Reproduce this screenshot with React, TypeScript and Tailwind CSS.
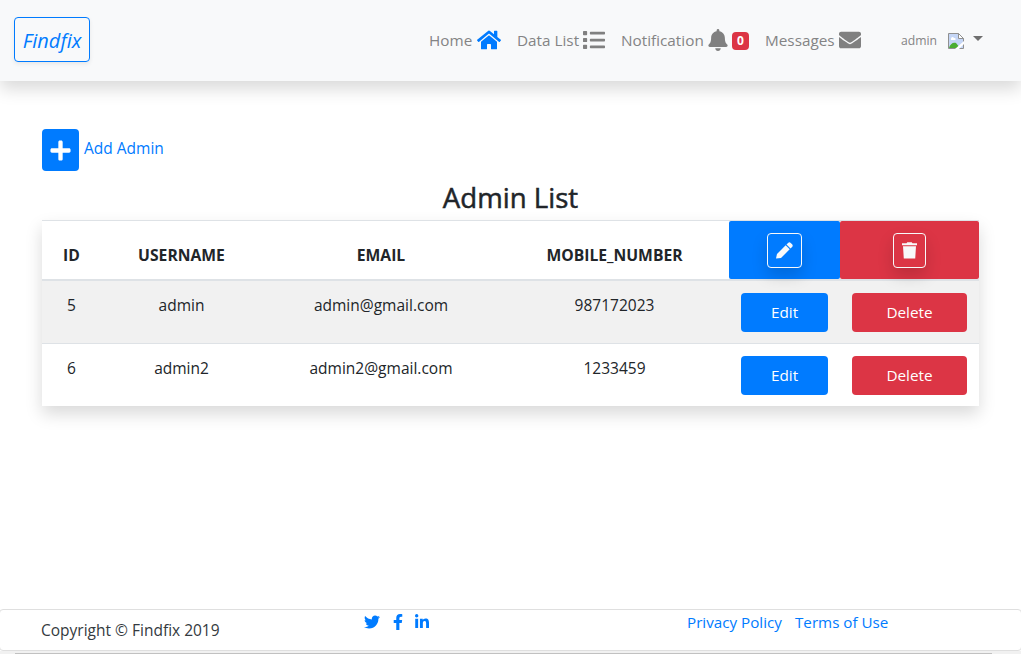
import { FaBell, FaEnvelope, FaFacebookF, FaHome, FaLinkedinIn, FaList, FaPlus, FaTwitter } from "react-icons/fa";

const admins = [
  { id: "5", username: "admin", email: "admin@gmail.com", mobile: "987172023" },
  { id: "6", username: "admin2", email: "admin2@gmail.com", mobile: "1233459" },
];

const columns = "grid grid-cols-[59px_161px_238px_229px_111px_139px]";

function MissingImage() {
  return (
    <svg width="16" height="16" viewBox="0 0 16 16" aria-hidden="true">
      <path d="M.5.5h10l5 5v10H.5z" fill="#c5d6f6" stroke="#909090" />
      <path d="M10.5.5v5h5z" fill="#fff" stroke="#909090" />
      <path d="M3 6c0-2 2-3 3-1 2-.5 2 2 1 2H3z" fill="#fff" />
      <path d="M1 15c1-4 4-6 7-5l4 5z" fill="#4bad31" />
      <path d="m7 16 9-8v3l-5 5z" fill="#fff" />
    </svg>
  );
}

function PencilIcon() {
  return (
    <svg width="17" height="17" viewBox="0 0 17 17" fill="currentColor" aria-hidden="true">
      <path d="M0 16.5 1 12 9.7 3.3l4 4L5 16z" />
      <path d="m10.5 2.5 1.6-1.6Q13.4-.2 14.7.9l1.4 1.4q1.2 1.3 0 2.6l-1.6 1.6z" />
    </svg>
  );
}

function TrashIcon() {
  return (
    <svg width="15" height="17" viewBox="0 0 15 17" fill="currentColor" aria-hidden="true">
      <path d="M0 1.2h4.5L5.3.2h4.4l.8 1H15v2H0z" />
      <path d="M1 4.2h13l-.8 12.3H1.8z" />
    </svg>
  );
}

function NavBar() {
  return (
    <header className="relative flex h-[81px] shrink-0 items-center bg-[#f8f9fa] pl-[14px] text-[#848485] shadow-[0_8px_16px_rgba(0,0,0,0.15)]">
      <a className="mt-[-3px] flex h-[45px] w-[76px] items-center justify-center rounded border border-[#007bff] pt-[3px] text-[20px] text-[#007bff] italic shadow-[0_2px_4px_rgba(0,0,0,0.075)]">
        Findfix
      </a>
      <nav className="ml-[339px] flex h-[30px] items-center text-[15.3px] whitespace-nowrap">
        <a className="flex w-[88px] items-center">
          <span className="w-[48px]">Home</span>
          <FaHome className="mb-[2px] h-[24px] w-[24px] text-[#007bff]" />
        </a>
        <a className="flex w-[104px] items-center">
          <span className="w-[66px]">Data List</span>
          <FaList className="mb-[2px] size-[22px] text-[#808080]" />
        </a>
        <a className="flex w-[144px] items-center">
          <span className="w-[87px]">Notification</span>
          <FaBell className="mb-[2px] h-[22px] w-[20px] text-[#808080]" />
          <span className="ml-[4px] flex h-[18px] w-[17px] items-center justify-center rounded bg-[#dc3545] text-[12px] font-bold text-white">0</span>
        </a>
        <a className="flex w-[136px] items-center">
          <span className="w-[74px]">Messages</span>
          <FaEnvelope className="mb-[2px] size-[22px] text-[#808080]" />
        </a>
        <a className="flex items-center text-[12.2px]">
          <span className="w-[47px] pt-px">admin</span>
          <span className="pt-[2px]">
            <MissingImage />
          </span>
          <span className="mb-[3px] ml-[9px] border-x-[5px] border-t-[5px] border-x-transparent border-t-[#6f6f6f]" />
        </a>
      </nav>
    </header>
  );
}

function AdminTable() {
  return (
    <section className="mx-[42px] w-[937px] shadow-[0_8px_16px_rgba(0,0,0,0.15)]">
      <div className={`${columns} h-[61px] border-t border-b-2 border-t-[#dee2e6] border-b-[#dee2e6] text-center text-[15.7px] leading-6 font-bold`}>
        <div className="pt-[22px]">ID</div>
        <div className="pt-[22px]">USERNAME</div>
        <div className="pt-[22px]">EMAIL</div>
        <div className="pt-[22px]">MOBILE_NUMBER</div>
        <div className="flex justify-center rounded-[2px] bg-[#007bff] pt-[12px]">
          <span className="relative flex h-[35px] w-[35px] items-center justify-center rounded border border-[#f8f9fa] text-[#f8f9fa] shadow-[0_8px_16px_rgba(0,0,0,0.15)]">
            <PencilIcon />
          </span>
        </div>
        <div className="flex justify-center rounded-[2px] bg-[#dc3545] pt-[12px]">
          <span className="relative flex h-[35px] w-[33px] items-center justify-center rounded border border-[#f8f9fa] text-[#f8f9fa] shadow-[0_8px_16px_rgba(0,0,0,0.15)]">
            <TrashIcon />
          </span>
        </div>
      </div>
      {admins.map((admin, index) => (
        <div key={admin.id} className={`${columns} text-center text-[15.5px] leading-6 ${index === 0 ? "h-[62px] bg-[#f1f1f1]" : "h-[63px] border-t border-[#dee2e6] bg-white"}`}>
          <div className="pt-[12px]">{admin.id}</div>
          <div className="pt-[12px]">{admin.username}</div>
          <div className="pt-[12px]">{admin.email}</div>
          <div className="pt-[12px]">{admin.mobile}</div>
          <div className="px-[12px] pt-[12px]">
            <button className="block h-[39px] w-full rounded bg-[#007bff] pb-px text-[15.3px] text-white">Edit</button>
          </div>
          <div className="px-[12px] pt-[12px]">
            <button className="block h-[39px] w-full rounded bg-[#dc3545] pb-px text-[15.3px] text-white">Delete</button>
          </div>
        </div>
      ))}
    </section>
  );
}

export default function App() {
  return (
    <div className="flex h-[654px] w-[1021px] flex-col overflow-hidden bg-white font-['Open_Sans','Noto_Sans',sans-serif] text-[#212529]">
      <NavBar />
      <main className="flex flex-1 flex-col pt-[48px]">
        <a className="ml-[42px] flex h-[42px] items-center text-[15.5px] text-[#007bff]">
          <span className="flex h-[42px] w-[37px] items-center justify-center rounded bg-[#007bff] text-white">
            <FaPlus className="size-[23px]" />
          </span>
          <span className="mb-[3px] ml-[5px]">Add Admin</span>
        </a>
        <h1 className="mt-[9px] h-[40px] text-center text-[27.6px] leading-[34px] font-medium [-webkit-text-stroke:0.5px_#212529]">Admin List</h1>
        <AdminTable />
      </main>
      <footer className="-mx-px flex h-[42px] shrink-0 rounded border border-[#dfdfdf] text-[15.2px] leading-6 whitespace-nowrap">
        <span className="w-[324px] pt-[8px] pl-[41px] text-[15.5px] text-[#343a40]">Copyright © Findfix 2019</span>
        <span className="flex w-[323px] pt-[4px] pl-[40px] text-[#007bff]">
          <FaTwitter className="size-[16px]" />
          <FaFacebookF className="ml-[10px] size-[16px]" />
          <FaLinkedinIn className="ml-[8px] size-[16px]" />
        </span>
        <span className="flex pl-[40px] text-[#007bff]">
          <a className="w-[108px]">Privacy Policy</a>
          <a>Terms of Use</a>
        </span>
      </footer>
      <div className="flex h-[3px] shrink-0 bg-[#f1f1f1] pt-[2px] pl-[15px]">
        <div className="h-px w-[977px] bg-[#c1c1c1]" />
      </div>
    </div>
  );
}
